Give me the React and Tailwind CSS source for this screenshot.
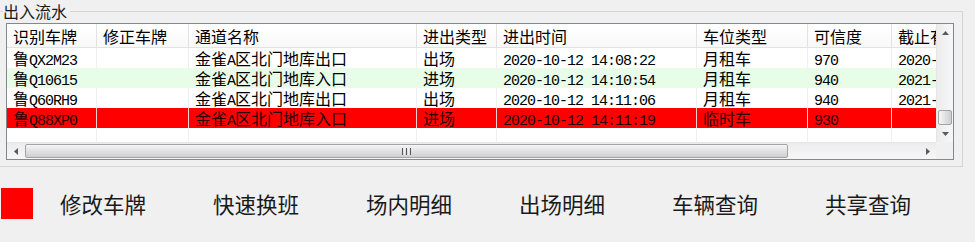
import React from 'react';

const cols = ['w-[90px]', 'w-[92px]', 'w-[228px]', 'w-[80px]', 'w-[200px]', 'w-[111px]', 'w-[84px]', 'w-[130px]'];

const headers = ['识别车牌', '修正车牌', '通道名称', '进出类型', '进出时间', '车位类型', '可信度', '截止有效期'];

const rows = [
  { bg: 'bg-white', line: 'border-[#f0f0f0]', text: 'text-black', cells: ['鲁QX2M23', '', '金雀A区北门地库出口', '出场', '2020-10-12 14:08:22', '月租车', '970', '2020-11-30'] },
  { bg: 'bg-[#e8fde8]', line: 'border-[#e8fde8]', text: 'text-black', cells: ['鲁Q10615', '', '金雀A区北门地库入口', '进场', '2020-10-12 14:10:54', '月租车', '940', '2021-01-31'] },
  { bg: 'bg-white', line: 'border-[#f0f0f0]', text: 'text-black', cells: ['鲁Q60RH9', '', '金雀A区北门地库出口', '出场', '2020-10-12 14:11:06', '月租车', '940', '2021-01-31'] },
  { bg: 'bg-[#ff0000]', line: 'border-[#ffd0d0]', text: 'text-[#2a0000]', cells: ['鲁Q88XP0', '', '金雀A区北门地库入口', '进场', '2020-10-12 14:11:19', '临时车', '930', ''] },
];

const buttons = ['修改车牌', '快速换班', '场内明细', '出场明细', '车辆查询', '共享查询'];

// ascii runs get the narrow mono face, the rest stays CJK
function Txt({ s }) {
  const parts = s.split(/([\x20-\x7e]+)/).filter(Boolean);
  return (
    <span className="whitespace-nowrap">
      {parts.map((p, i) =>
        /^[\x20-\x7e]+$/.test(p) ? (
          <span key={i} className="font-['Liberation_Mono',monospace] text-[15px] tracking-[-1px]">{p}</span>
        ) : (
          <span key={i}>{p}</span>
        )
      )}
    </span>
  );
}

function Arrow({ dir }) {
  const pts = {
    up: '0,4 3.5,0 7,4',
    down: '0,0 3.5,4 7,0',
    left: '4,0 0,3.5 4,7',
    right: '0,0 4,3.5 0,7',
  }[dir];
  const vertical = dir === 'up' || dir === 'down';
  return (
    <svg width={vertical ? 7 : 4} height={vertical ? 4 : 7}>
      <polygon points={pts} fill="#5a5a5a" />
    </svg>
  );
}

export default function App() {
  return (
    <div className="w-[975px] h-[242px] bg-[#f0f0f0] overflow-hidden font-['Noto_Sans_CJK_SC',sans-serif] text-[#1a1a1a]">
      <div className="relative mt-[11px] w-[963px] h-[156px] border-t border-r border-b border-[#d5d5d5]">
        <div className="absolute left-[3px] top-[-11px] pr-[3px] bg-[#f0f0f0] text-[16px] leading-[20px]">出入流水</div>

        <div className="ml-[6px] mt-[11px] w-[948px] h-[137px] border border-[#828790] bg-white flex">
          <div className="w-[929px] flex flex-col">
            <div className="h-[118px] overflow-hidden">
              <div className="h-[24px] flex border-b border-[#e3e3e3] bg-gradient-to-b from-white to-[#f9f9f9]">
                {headers.map((h, i) => (
                  <div key={i} className={`${cols[i]} shrink-0 border-r border-[#e3e3e3] pl-[6px] flex items-center text-[16px] leading-[20px] text-black whitespace-nowrap overflow-hidden`}>
                    {h}
                  </div>
                ))}
              </div>
              {rows.map((r, ri) => (
                <div key={ri} className={`h-[20px] flex ${r.bg} ${r.text}`}>
                  {r.cells.map((c, i) => (
                    <div key={i} className={`${cols[i]} shrink-0 border-r ${r.line} pl-[6px] text-[16px] leading-[20px] whitespace-nowrap overflow-hidden`}>
                      <Txt s={c} />
                    </div>
                  ))}
                </div>
              ))}
              <div className="h-[20px] flex bg-white">
                {cols.map((w, i) => (
                  <div key={i} className={`${w} shrink-0 border-r border-[#f0f0f0]`} />
                ))}
              </div>
            </div>

            <div className="h-[17px] flex bg-gradient-to-b from-[#ececec] to-[#f7f7f7] border-t border-[#e6e6e6]">
              <div className="w-[17px] flex items-center justify-center"><Arrow dir="left" /></div>
              <div className="ml-[1px] mt-[1px] w-[763px] h-[14px] rounded-[2px] border border-[#a3a3a3] bg-gradient-to-b from-[#f5f5f5] via-[#e2e2e2] to-[#cfcfcf] flex items-center justify-center">
                <div className="flex gap-[1px]">
                  <div className="w-[1px] h-[7px] bg-[#555]" />
                  <div className="w-[1px] h-[7px] bg-[#eee]" />
                  <div className="w-[1px] h-[7px] bg-[#555]" />
                  <div className="w-[1px] h-[7px] bg-[#eee]" />
                  <div className="w-[1px] h-[7px] bg-[#555]" />
                </div>
              </div>
              <div className="flex-1" />
              <div className="w-[17px] flex items-center justify-center"><Arrow dir="right" /></div>
            </div>
          </div>

          <div className="w-[17px] flex flex-col">
            <div className="h-[118px] flex flex-col bg-gradient-to-r from-[#ececec] to-[#f7f7f7] border-l border-[#e6e6e6]">
              <div className="h-[17px] flex items-center justify-center"><Arrow dir="up" /></div>
              <div className="flex-1" />
              <div className="mx-[1px] h-[15px] rounded-[2px] border border-[#a3a3a3] bg-gradient-to-r from-[#f5f5f5] via-[#e2e2e2] to-[#cfcfcf]" />
              <div className="h-[17px] flex items-center justify-center"><Arrow dir="down" /></div>
            </div>
            <div className="h-[17px] bg-[#f0f0f0]" />
          </div>
        </div>
      </div>

      <div className="mt-[21px] h-[31px] flex items-center">
        <div className="ml-[1px] w-[32px] h-[31px] shrink-0 bg-[#ff0000]" />
        <div className="ml-[27px] flex shrink-0">
          {buttons.map((b) => (
            <div key={b} className="w-[153px] shrink-0 text-[21.5px] leading-[31px] text-[#1a1a1a] whitespace-nowrap">{b}</div>
          ))}
        </div>
      </div>
    </div>
  );
}
